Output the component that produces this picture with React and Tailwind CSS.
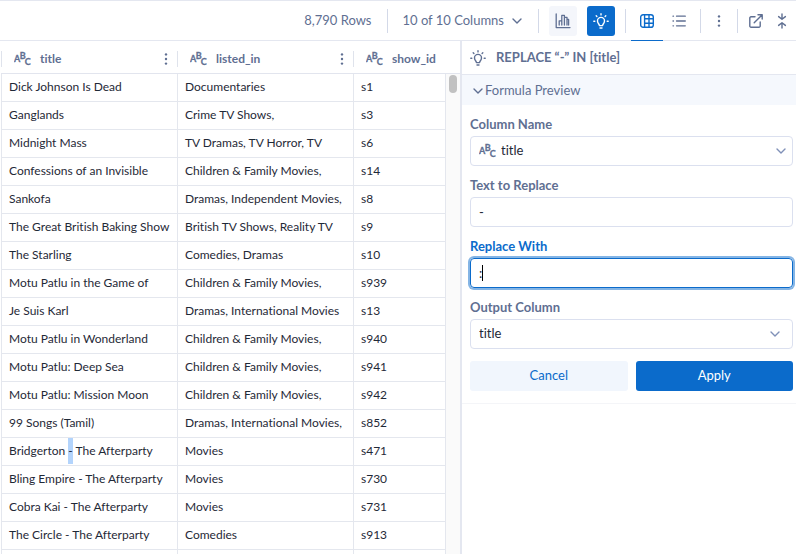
import { useState } from "react";

const rows = [
  ["Dick Johnson Is Dead", "Documentaries", "s1"],
  ["Ganglands", "Crime TV Shows,", "s3"],
  ["Midnight Mass", "TV Dramas, TV Horror, TV", "s6"],
  ["Confessions of an Invisible", "Children & Family Movies,", "s14"],
  ["Sankofa", "Dramas, Independent Movies,", "s8"],
  ["The Great British Baking Show", "British TV Shows, Reality TV", "s9"],
  ["The Starling", "Comedies, Dramas", "s10"],
  ["Motu Patlu in the Game of", "Children & Family Movies,", "s939"],
  ["Je Suis Karl", "Dramas, International Movies", "s13"],
  ["Motu Patlu in Wonderland", "Children & Family Movies,", "s940"],
  ["Motu Patlu: Deep Sea", "Children & Family Movies,", "s941"],
  ["Motu Patlu: Mission Moon", "Children & Family Movies,", "s942"],
  ["99 Songs (Tamil)", "Dramas, International Movies,", "s852"],
  ["Bridgerton - The Afterparty", "Movies", "s471"],
  ["Bling Empire - The Afterparty", "Movies", "s730"],
  ["Cobra Kai - The Afterparty", "Movies", "s731"],
  ["The Circle - The Afterparty", "Comedies", "s913"],
  ["", "", ""],
];

function TextTypeIcon() {
  return (
    <svg width="17" height="16" viewBox="0 0 17 16" className="shrink-0 fill-current stroke-current text-[9px] font-bold" strokeWidth=".3" aria-hidden="true">
      <text x="0" y="11">
        A<tspan dx="-.5" dy="-3">B</tspan><tspan dx="-1" dy="6">C</tspan>
      </text>
    </svg>
  );
}

function BulbIcon() {
  return (
    <svg width="16" height="16" viewBox="0 0 16 16" fill="none" stroke="currentColor" strokeWidth="1.4" strokeLinecap="round" strokeLinejoin="round" aria-hidden="true">
      <path d="M6.4 12.6C6.4 11 4.5 10.3 4.5 7.9a3.5 3.5 0 0 1 7 0c0 2.4-1.9 3.1-1.9 4.7z" />
      <path d="M7 15h2M8 .8v1.1M3.2 2.8l.7.7M12.8 2.8l-.7.7M.8 8.2h1M14.2 8.2h1" />
    </svg>
  );
}

function ChevronIcon({ className }) {
  return (
    <svg width="10" height="6" viewBox="0 0 10 6" fill="none" stroke="currentColor" strokeWidth="1.4" strokeLinecap="round" strokeLinejoin="round" className={className} aria-hidden="true">
      <path d="M1 1l4 4 4-4" />
    </svg>
  );
}

function DotsIcon() {
  return (
    <svg width="4" height="14" viewBox="0 0 4 14" fill="currentColor" aria-hidden="true">
      <circle cx="2" cy="2.4" r="1.2" />
      <circle cx="2" cy="7" r="1.2" />
      <circle cx="2" cy="11.6" r="1.2" />
    </svg>
  );
}

function ChartIcon() {
  return (
    <svg width="16" height="16" viewBox="0 0 16 16" fill="none" stroke="currentColor" strokeWidth="1.3" strokeLinecap="round" strokeLinejoin="round" aria-hidden="true">
      <path d="M1.2 1v13.6H15" />
      <path d="M4.2 12V7.8h2.6V12M6.8 7.8V2.4h2.6V12M9.4 4.4H12V12M12 6.4h1.6V12" />
    </svg>
  );
}

function GridIcon() {
  return (
    <svg width="14" height="14" viewBox="0 0 14 14" fill="none" stroke="currentColor" strokeWidth="1.4" aria-hidden="true">
      <rect x=".7" y=".7" width="12.6" height="12.6" rx="2.4" />
      <path d="M4.6 1v12M9 1v12M4.6 4.8H13M4.6 9.2H13" />
    </svg>
  );
}

function ListIcon() {
  return (
    <svg width="14" height="14" viewBox="0 0 14 14" fill="none" stroke="currentColor" strokeWidth="1.3" strokeLinecap="round" aria-hidden="true">
      <path d="M1 2.2h.5M1 7h.5M1 11.8h.5M4.5 2.2h8.8M4.5 7h8.8M4.5 11.8h8.8" />
    </svg>
  );
}

function ExternalIcon() {
  return (
    <svg width="14" height="14" viewBox="0 0 14 14" fill="none" stroke="currentColor" strokeWidth="1.4" strokeLinecap="round" strokeLinejoin="round" aria-hidden="true">
      <path d="M6 2.8H2A1.2 1.2 0 0 0 .8 4v8A1.2 1.2 0 0 0 2 13.2h8a1.2 1.2 0 0 0 1.2-1.2V8" />
      <path d="M9 .8h4.2V5M13 1L5.2 8.8" />
    </svg>
  );
}

function CollapseIcon() {
  return (
    <svg width="10" height="16" viewBox="0 0 10 16" fill="none" stroke="currentColor" strokeWidth="1.4" strokeLinecap="round" strokeLinejoin="round" aria-hidden="true">
      <path d="M5 .9v5M1.6 3.6L5 6.3l3.4-2.7M5 15.1v-5M1.6 12.4L5 9.7l3.4 2.7" />
    </svg>
  );
}

function Divider() {
  return <span className="h-6 w-px bg-[#d3d9e8]"></span>;
}

function HeaderCell({ name, menu }) {
  return (
    <th scope="col" className="h-[33px] p-0 pt-[3px] text-left">
      <div className="flex h-4 items-center border-l border-[#dfe3ec] pr-[9px] pl-3">
        <TextTypeIcon />
        <span className="ml-[9px] flex-1 text-[12px] font-bold">{name}</span>
        {menu && (
          <button type="button" aria-label={`${name} options`}>
            <DotsIcon />
          </button>
        )}
      </div>
    </th>
  );
}

function Toolbar() {
  return (
    <div className="flex h-[41px] shrink-0 items-center justify-end border-y border-[#e4e7f0] pr-[9px]">
      <span className="mr-4 text-[13px]">8,790 Rows</span>
      <Divider />
      <button type="button" className="mr-4 ml-[14px] flex items-center gap-2 text-[13px]">
        10 of 10 Columns
        <ChevronIcon />
      </button>
      <Divider />
      <div className="flex gap-[10px] px-[10px]">
        <button type="button" aria-label="Charts" className="flex h-[30px] w-7 items-center justify-center rounded-[3px] bg-[#f4f6fb]">
          <ChartIcon />
        </button>
        <button type="button" aria-label="Suggestions" className="flex h-[30px] w-7 items-center justify-center rounded-[3px] bg-[#0b6bcb] text-white">
          <BulbIcon />
        </button>
      </div>
      <Divider />
      <div className="mx-[5px] flex h-10 self-start">
        <button type="button" aria-label="Grid view" className="flex w-8 items-center justify-center border-b border-[#0b6bcb] text-[#0b6bcb]">
          <GridIcon />
        </button>
        <button type="button" aria-label="List view" className="flex w-8 items-center justify-center">
          <ListIcon />
        </button>
      </div>
      <Divider />
      <button type="button" aria-label="More" className="mx-4 flex">
        <DotsIcon />
      </button>
      <Divider />
      <button type="button" aria-label="Open in new window" className="mr-[14px] ml-[11px] flex">
        <ExternalIcon />
      </button>
      <button type="button" aria-label="Collapse" className="flex">
        <CollapseIcon />
      </button>
    </div>
  );
}

function DataTable() {
  return (
    <div className="relative min-w-0 flex-1 overflow-hidden pl-px">
      <table className="w-full table-fixed border-separate border-spacing-0">
        <colgroup>
          <col className="w-44" />
          <col className="w-44" />
          <col />
        </colgroup>
        <thead>
          <tr className="[&>th]:border-b [&>th]:border-[#e2e5ee]">
            <HeaderCell name="title" menu />
            <HeaderCell name="listed_in" menu />
            <HeaderCell name="show_id" />
          </tr>
        </thead>
        <tbody className="text-[12px] text-[#1f2937]">
          {rows.map((row, i) => (
            <tr key={i}>
              {row.map((cell, j) => (
                <td key={j} className="h-7 overflow-hidden border-b border-l border-[#e4e7ee] pt-0 pr-0 pb-[2px] pl-[7px] whitespace-nowrap">
                  {cell.startsWith("Bridgerton") ? (
                    <>
                      Bridgerton <mark className="bg-[#b3d4fc] py-[6px] text-inherit">-</mark> The Afterparty
                    </>
                  ) : (
                    cell
                  )}
                </td>
              ))}
            </tr>
          ))}
        </tbody>
      </table>
      <div className="absolute top-[33px] right-0 bottom-0 w-[15px] border-l border-[#e4e7ee] bg-[#fafafa] px-[3px] pt-px">
        <div className="h-[18px] w-2 rounded-full bg-[#c1c1c1]"></div>
      </div>
    </div>
  );
}

function SelectField({ id, label, icon }) {
  return (
    <div>
      <label htmlFor={id} className="block h-6 text-[13px] leading-6 font-bold">{label}</label>
      <div className="relative">
        {icon && (
          <span className="pointer-events-none absolute top-[7px] left-[9px]">
            <TextTypeIcon />
          </span>
        )}
        <select id={id} defaultValue="title"
          className={`block h-[30px] w-full appearance-none rounded border border-[#dbe0ef] bg-white text-[13px] text-[#1f2937] outline-none ${icon ? "pl-[30px]" : "pl-2"}`}>
          <option value="title">title</option>
          <option value="listed_in">listed_in</option>
          <option value="show_id">show_id</option>
        </select>
        <ChevronIcon className={`pointer-events-none absolute top-3 text-[#7f90b8] ${icon ? "right-[7px]" : "right-[13px]"}`} />
      </div>
    </div>
  );
}

function ReplacePanel() {
  const [find, setFind] = useState("-");
  const [replacement, setReplacement] = useState(":");

  return (
    <aside className="w-[336px] shrink-0 border-l-2 border-[#e4e7f0]">
      <div className="flex h-[34px] items-center border-b border-[#e4e7f0] pt-px pl-2">
        <BulbIcon />
        <h2 className="ml-[10px] text-[13px] font-bold">REPLACE “-” IN [title]</h2>
      </div>
      <button type="button" className="flex h-[30px] w-full items-center gap-[2px] bg-[#f5f8fd] pt-[2px] pl-[11px] text-[13px]">
        <ChevronIcon />
        Formula Preview
      </button>

      <form onSubmit={(e) => e.preventDefault()} className="flex flex-col gap-[7px] border-b border-[#f4f5f8] pt-[7px] pr-[3px] pb-3 pl-2">
        <SelectField id="column" label="Column Name" icon />
        <div>
          <label htmlFor="find" className="block h-6 text-[13px] leading-6 font-bold">Text to Replace</label>
          <input id="find" type="text" value={find} onChange={(e) => setFind(e.target.value)}
            className="block h-[30px] w-full rounded border border-[#dbe0ef] px-2 text-[13px] text-[#1f2937] outline-none" />
        </div>
        <div>
          <label htmlFor="replacement" className="block h-6 text-[13px] leading-6 font-bold text-[#0b6bcb]">Replace With</label>
          <div className="relative">
            <input id="replacement" type="text" value={replacement} onChange={(e) => setReplacement(e.target.value)}
              className="block h-[30px] w-full rounded border border-[#0b6bcb] px-2 text-[13px] text-[#1f2937] caret-transparent ring-2 ring-[#0b6bcb]/50 outline-none" />
            <span className="pointer-events-none absolute top-[7px] left-3 h-4 w-px bg-black"></span>
          </div>
        </div>
        <SelectField id="output" label="Output Column" />
        <div className="mt-[5px] flex gap-2 text-[13px]">
          <button type="button" className="h-[30px] flex-1 rounded-[3px] bg-[#f1f6fd] text-[#0b6bcb]">Cancel</button>
          <button type="submit" className="h-[30px] flex-1 rounded-[3px] bg-[#0b6bcb] text-white">Apply</button>
        </div>
      </form>
    </aside>
  );
}

function App() {
  return (
    <div className="flex h-screen flex-col overflow-hidden bg-white font-['Lato',sans-serif] text-[#5f6f92] [font-variant-ligatures:none]">
      <Toolbar />
      <div className="flex min-h-0 flex-1">
        <DataTable />
        <ReplacePanel />
      </div>
    </div>
  );
}

export default App;
